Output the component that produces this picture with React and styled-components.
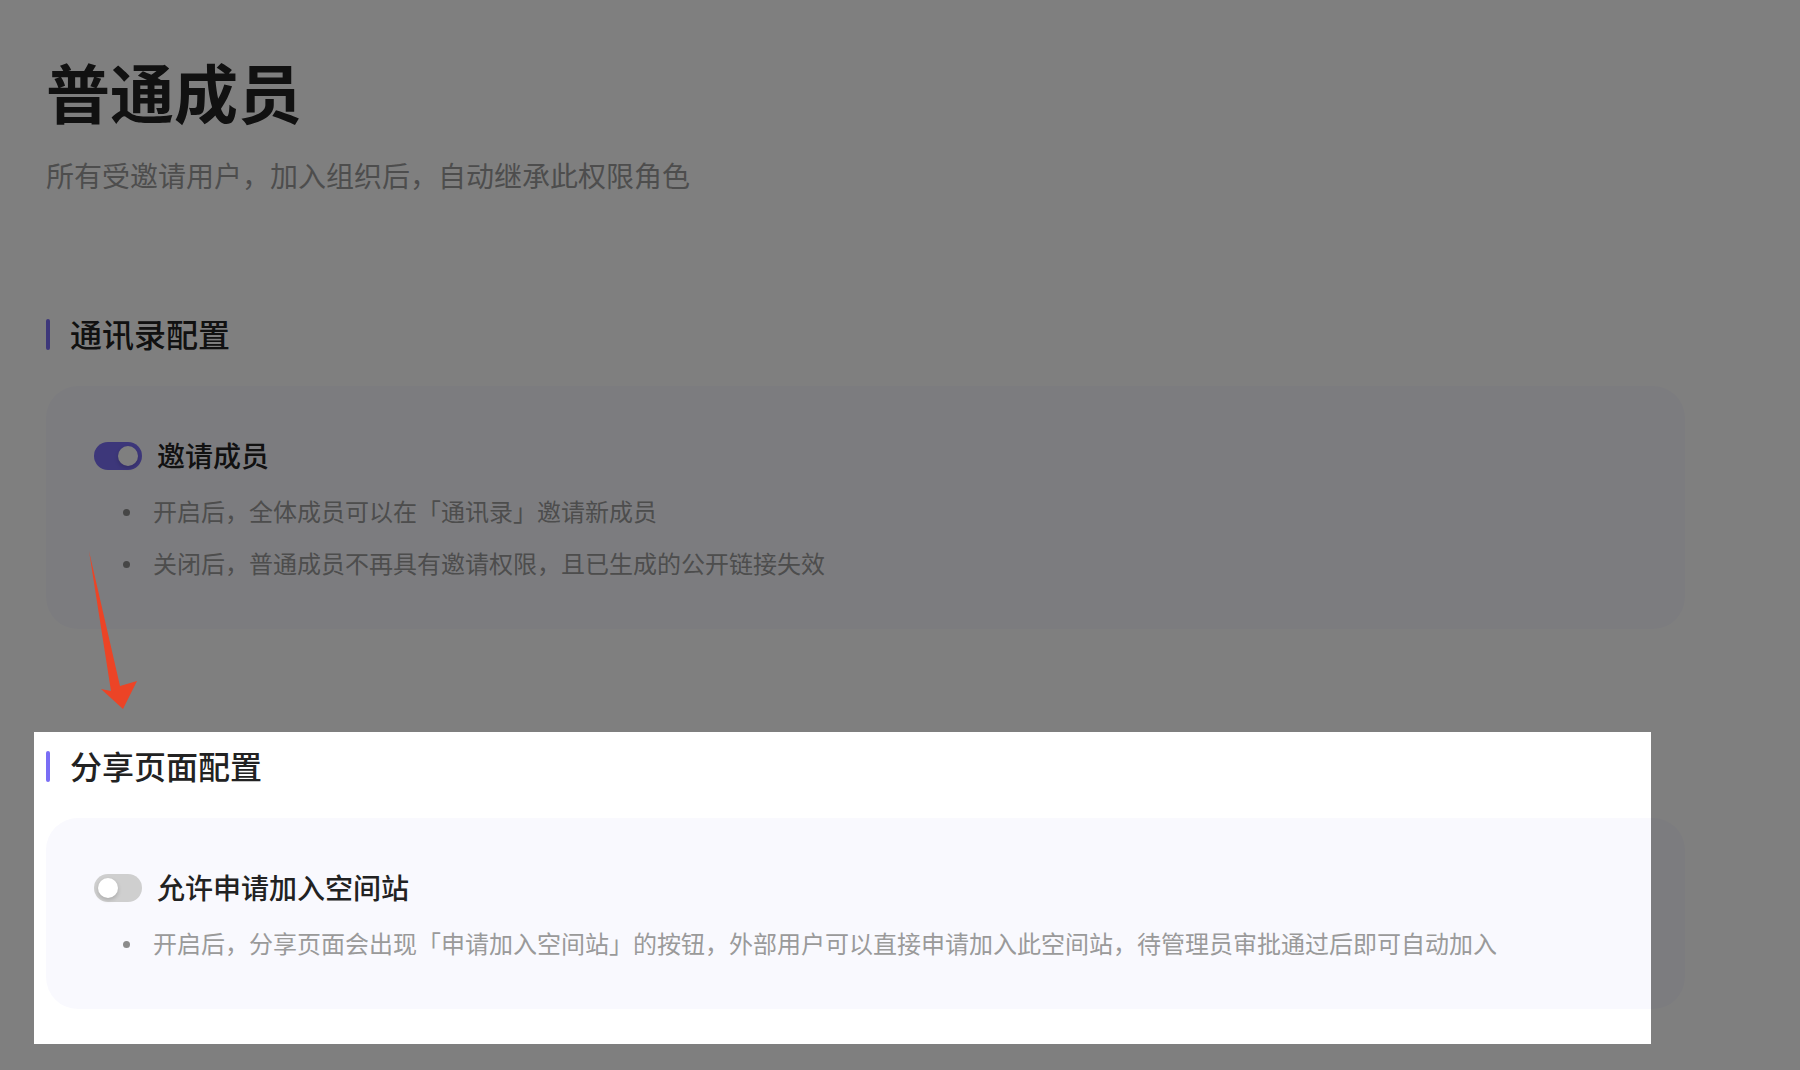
import React from "react";
import styled, { createGlobalStyle } from "styled-components";

const GlobalStyle = createGlobalStyle`
	html, body {
		margin: 0;
		padding: 0;
		background: #ffffff;
	}
	body {
		font-family: "Noto Sans CJK SC", "Noto Sans", "Liberation Sans", sans-serif;
	}
`;

const App = () => {
	return (
		<Page>
			<GlobalStyle />
			<Title>普通成员</Title>
			<Subtitle>所有受邀请用户，加入组织后，自动继承此权限角色</Subtitle>

			<Section $gap={118}>
				<SectionHeading>通讯录配置</SectionHeading>
				<Card>
					<ToggleRow>
						<Toggle $on />
						<Label>邀请成员</Label>
					</ToggleRow>
					<Bullets>
						<li>开启后，全体成员可以在「通讯录」邀请新成员</li>
						<li>关闭后，普通成员不再具有邀请权限，且已生成的公开链接失效</li>
					</Bullets>
				</Card>
			</Section>

			<Section $gap={116}>
				<Spotlight />
				<SectionHeading>分享页面配置</SectionHeading>
				<Card>
					<ToggleRow>
						<Toggle />
						<Label>允许申请加入空间站</Label>
					</ToggleRow>
					<Bullets>
						<li>
							开启后，分享页面会出现「申请加入空间站」的按钮，外部用户可以直接申请加入此空间站，待管理员审批通过后即可自动加入
						</li>
					</Bullets>
				</Card>
			</Section>

			<Arrow viewBox="0 0 60 180" width="60" height="180">
				<polygon points="9,11 40,146 57,141 43,169 21,149 31,151" fill="#ec4426" />
			</Arrow>
		</Page>
	);
};

const Page = styled.div`
	position: relative;
	width: 1800px;
	height: 1070px;
	overflow: hidden;
	box-sizing: border-box;
	padding: 50px 115px 0 46px;
	background: #ffffff;
`;

const Title = styled.h1`
	margin: 0;
	font-size: 64px;
	line-height: 80px;
	font-weight: 700;
	color: #222222;
`;

const Subtitle = styled.p`
	margin: 25px 0 0;
	font-size: 28px;
	line-height: 40px;
	color: #9b9b9b;
`;

const Section = styled.section`
	position: relative;
	margin-top: ${(p) => p.$gap}px;
`;

const SectionHeading = styled.h2`
	position: relative;
	margin: 0;
	padding-left: 24px;
	font-size: 32px;
	line-height: 40px;
	font-weight: 500;
	color: #222222;
	&::before {
		content: "";
		position: absolute;
		left: 0;
		top: 6px;
		width: 4px;
		height: 31px;
		border-radius: 2px;
		background: #7a6ef5;
	}
`;

const Card = styled.div`
	margin-top: 33px;
	padding: 49px 48px 46px;
	border-radius: 32px;
	background: #f9f9fe;
`;

const ToggleRow = styled.div`
	display: flex;
	align-items: center;
	gap: 15px;
	height: 40px;
`;

const Toggle = styled.span`
	position: relative;
	flex: none;
	width: 48px;
	height: 28px;
	margin-top: 2px;
	border-radius: 14px;
	background: ${(p) => (p.$on ? "#7a6ef5" : "#cfcfcf")};
	&::after {
		content: "";
		position: absolute;
		top: 4px;
		left: ${(p) => (p.$on ? "24px" : "4px")};
		width: 20px;
		height: 20px;
		border-radius: 50%;
		background: #ffffff;
		box-shadow: 0 2px 4px rgba(0, 0, 0, 0.18);
	}
`;

const Label = styled.span`
	font-size: 28px;
	line-height: 40px;
	font-weight: 500;
	color: #222222;
`;

const Bullets = styled.ul`
	margin: 16px 0 0;
	padding: 0;
	list-style: none;
	li {
		position: relative;
		padding-left: 59px;
		font-size: 24px;
		line-height: 40px;
		color: #9a9a9a;
	}
	li + li {
		margin-top: 12px;
	}
	li::before {
		content: "";
		position: absolute;
		left: 29px;
		top: 18px;
		width: 7px;
		height: 7px;
		border-radius: 50%;
		background: #8c8c8c;
	}
`;

const Spotlight = styled.div`
	position: absolute;
	top: -13px;
	left: -12px;
	right: 34px;
	bottom: -35px;
	z-index: 5;
	pointer-events: none;
	box-shadow: 0 0 0 3000px rgba(0, 0, 0, 0.5);
`;

const Arrow = styled.svg`
	position: absolute;
	left: 80px;
	top: 540px;
	z-index: 10;
`;

export default App;
